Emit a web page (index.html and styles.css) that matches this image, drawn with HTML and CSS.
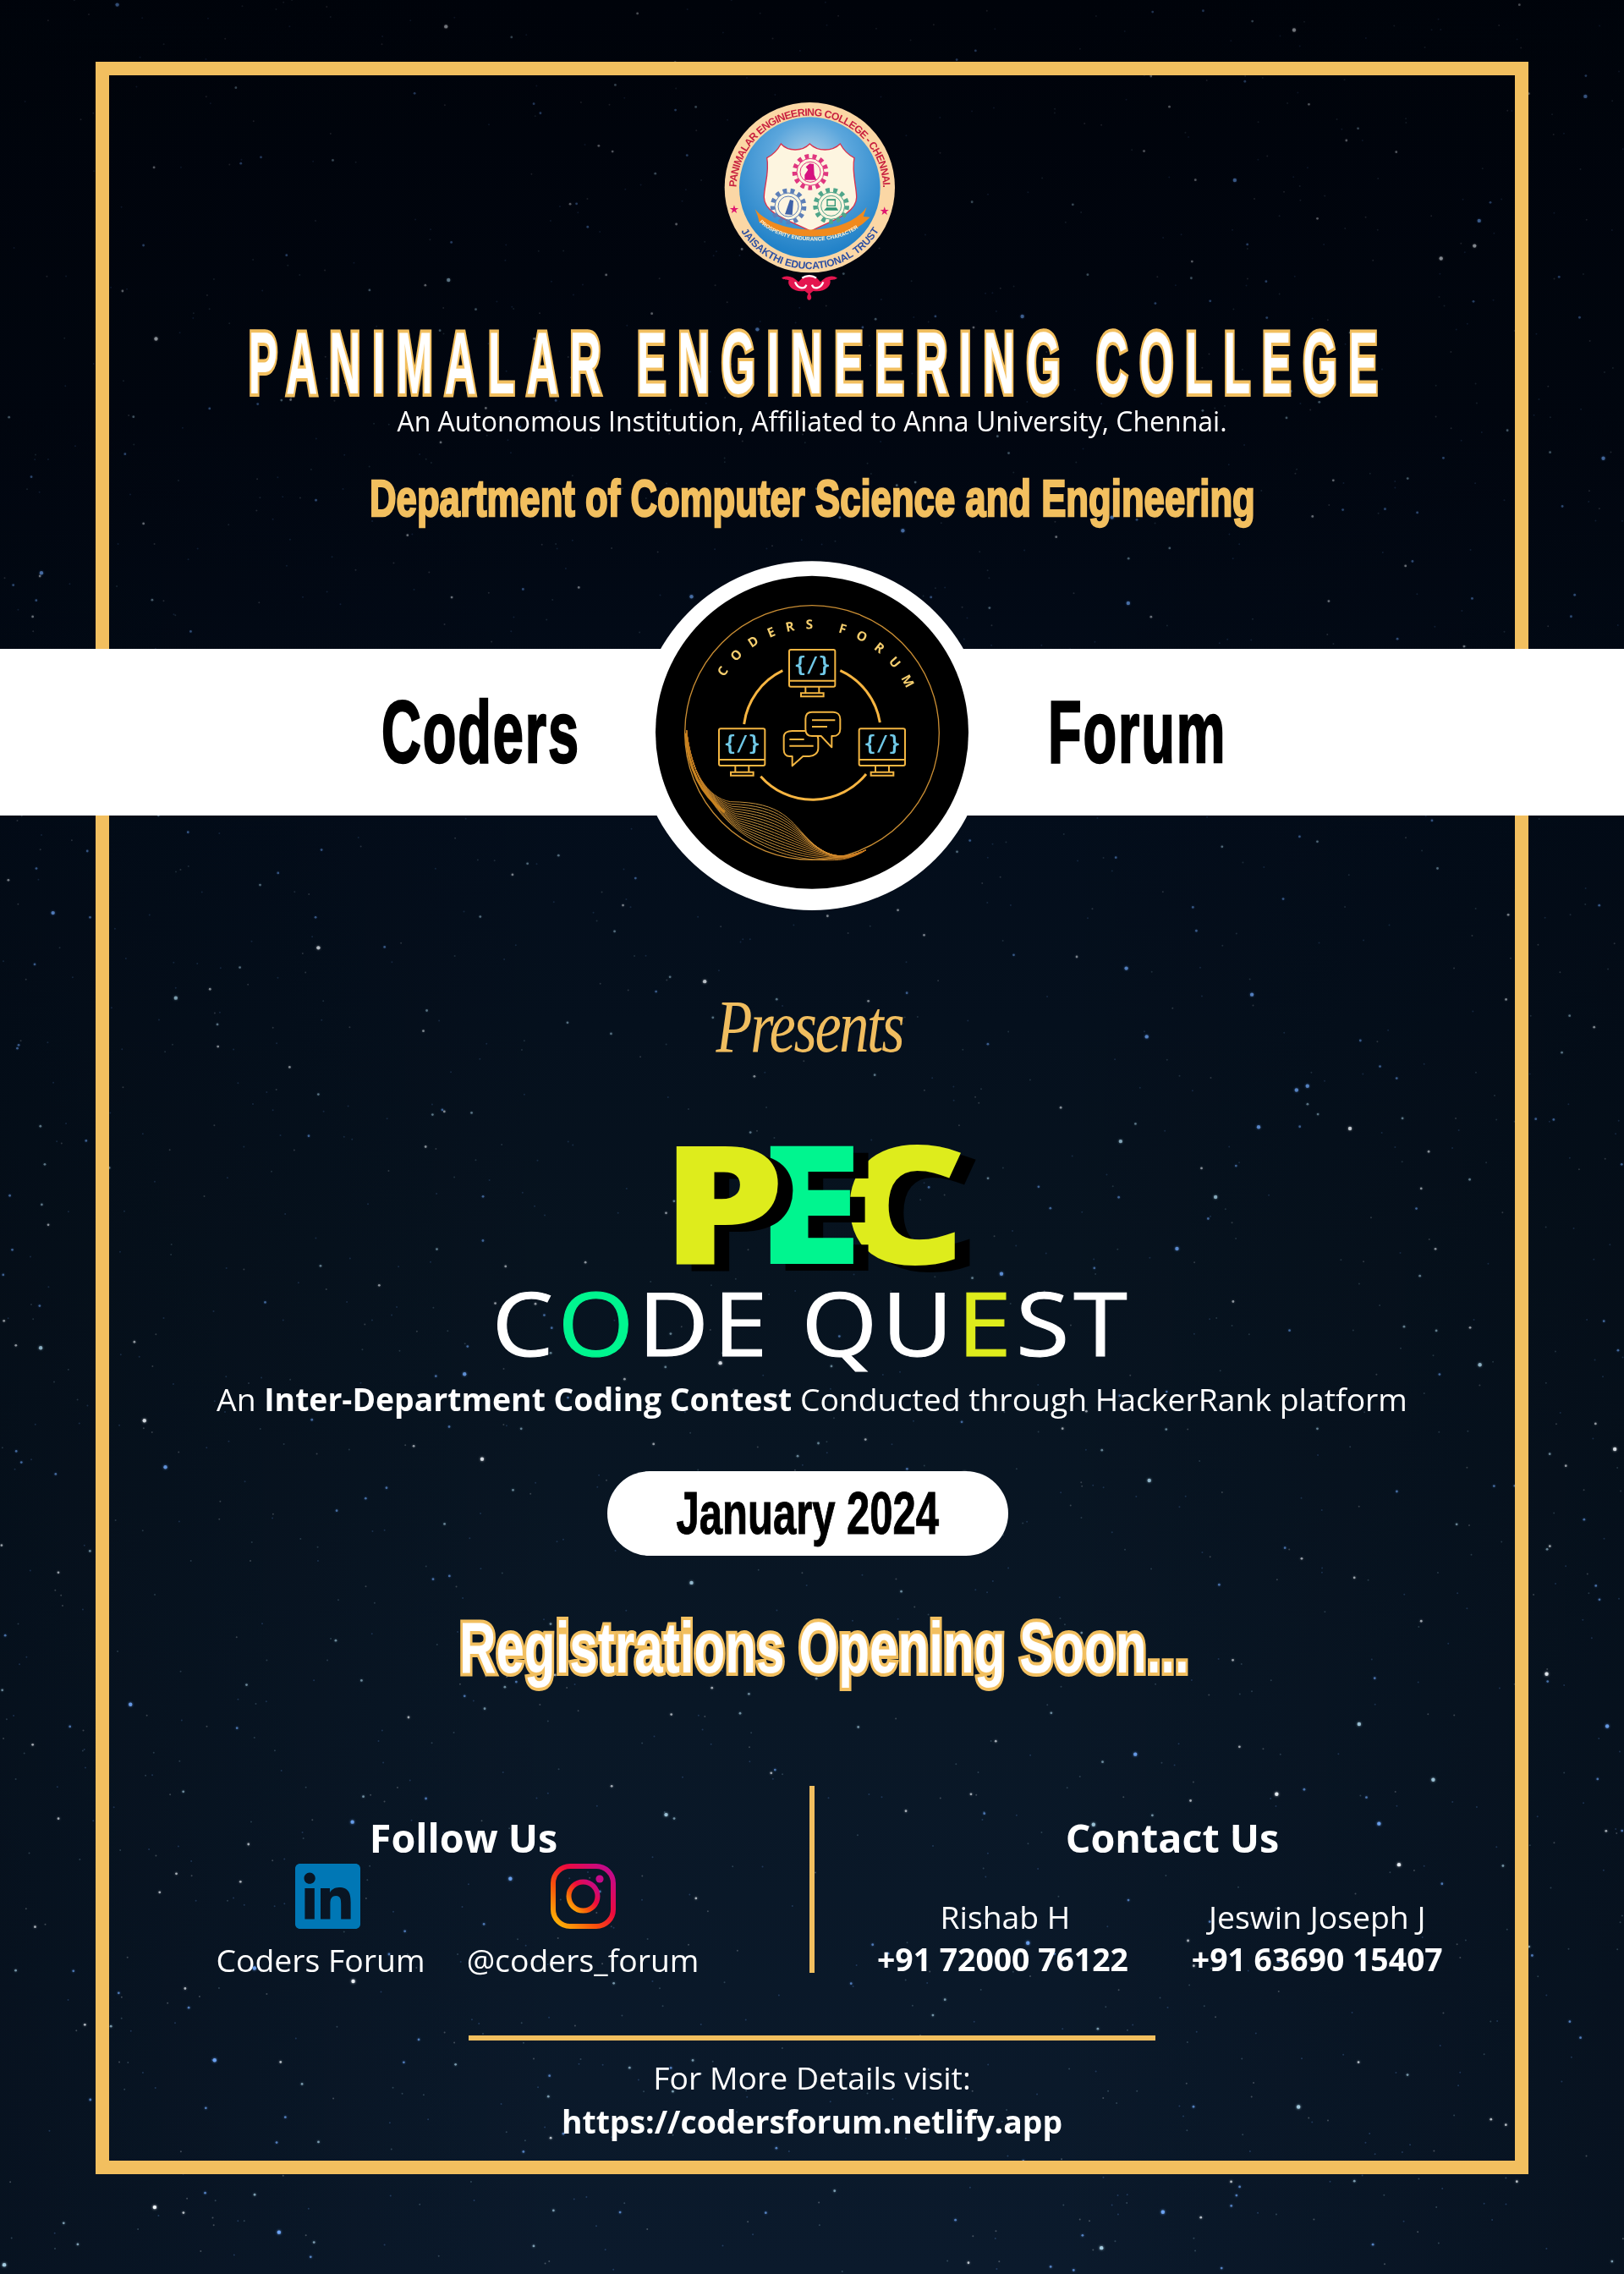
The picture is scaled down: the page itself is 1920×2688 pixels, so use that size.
FILE: index.html
```html
<!DOCTYPE html>
<html lang="en">
<head>
<meta charset="utf-8">
<title>PEC Code Quest</title>
<link rel="stylesheet" href="styles.css">
</head>
<body>
<main class="page">
  <canvas class="stars" id="stars" width="1920" height="2688"></canvas>
  <div class="frame">
    <svg class="seal" viewBox="0 0 1080 870" aria-label="Panimalar Engineering College seal">
      <defs>
        <radialGradient id="sky" cx="50%" cy="32%" r="65%">
          <stop offset="0" stop-color="#b9d6ea"/><stop offset=".45" stop-color="#5ba6dc"/><stop offset="1" stop-color="#2282c8"/>
        </radialGradient>
        <path id="sealTop" d="M272 400A260 260 0 0 1 792 400"/>
        <path id="sealBottom" d="M285 545A289 289 0 0 0 779 545"/>
        <path id="sealBanner" d="M352 516C430 600 640 610 722 522"/>
      </defs>
      <circle cx="532" cy="395" r="302" fill="#fbd7a5"/>
      <circle cx="532" cy="395" r="250" fill="url(#sky)"/>
      <path d="M430 240C455 268 505 268 532 240C560 268 612 268 640 240C652 262 670 280 690 290C680 340 698 390 698 430C698 490 600 515 535 550C470 515 370 490 370 430C370 390 390 340 380 290C400 280 418 262 430 240Z" fill="#fdf5e0" stroke="#d8324f" stroke-width="4"/>
      <g fill="none">
        <g stroke="#e0367f">
          <circle cx="534" cy="340" r="56" stroke-width="16" stroke-dasharray="14 13"/>
          <circle cx="534" cy="340" r="48" stroke-width="3"/>
          <circle cx="534" cy="340" r="36" stroke-width="3"/>
        </g>
        <g stroke="#5c7fb8">
          <circle cx="456" cy="462" r="56" stroke-width="16" stroke-dasharray="14 13"/>
          <circle cx="456" cy="462" r="48" stroke-width="3"/>
          <circle cx="456" cy="462" r="36" stroke-width="3"/>
        </g>
        <g stroke="#4fa58a">
          <circle cx="608" cy="460" r="56" stroke-width="16" stroke-dasharray="14 13"/>
          <circle cx="608" cy="460" r="48" stroke-width="3"/>
          <circle cx="608" cy="460" r="36" stroke-width="3"/>
        </g>
      </g>
      <path d="M514 368L514 350L526 332L518 322L532 310L546 312L548 350L556 368Z" fill="#d6127f"/>
      <path d="M444 490L462 438L474 442L470 492Z" fill="#3e62a8"/>
      <path d="M592 436H624V462H592ZM582 476L592 466H626L634 476Z" fill="#2f9575"/>
      <path d="M596 441H620V458H596Z" fill="#fdf5e0"/>
      <path d="M338 472C345 490 350 500 352 516C430 580 640 590 722 522L746 500L722 498L734 464C660 570 420 570 338 472Z" fill="#f08a1e"/>
      <text class="seal-motto"><textPath href="#sealBanner" textLength="376" startOffset="2">PROSPERITY ENDURANCE CHARACTER</textPath></text>
      <text class="seal-top"><textPath href="#sealTop" textLength="806" startOffset="6">PANIMALAR ENGINEERING COLLEGE - CHENNAI.</textPath></text>
      <text class="seal-bottom"><textPath href="#sealBottom" textLength="584" startOffset="6">JAISAKTHI EDUCATIONAL TRUST</textPath></text>
      <text class="seal-star" x="264" y="487">★</text>
      <text class="seal-star" x="797" y="491">★</text>
      <path d="M432 716C450 700 480 715 492 730C505 715 515 706 530 704C548 706 558 715 570 730C582 715 610 700 630 716C620 724 612 720 604 724C610 740 590 768 545 762C538 766 534 772 530 774C524 770 520 766 514 762C470 768 450 740 458 724C450 720 442 724 432 716Z" fill="#e4164f"/>
      <path d="M480 730C490 756 515 756 520 740M580 730C570 756 545 756 540 740M505 716C518 706 542 706 555 716" fill="none" stroke="#fff" stroke-width="7"/>
      <path d="M530 768C540 778 540 794 530 794C520 794 520 778 530 768Z" fill="#e4164f"/>
    </svg>

    <h1 class="college">PANIMALAR ENGINEERING COLLEGE</h1>
    <p class="affiliation">An Autonomous Institution, Affiliated to Anna University, Chennai.</p>
    <h2 class="department">Department of Computer Science and Engineering</h2>

    <section class="band">
      <div class="band-word band-word-left"><span>Coders</span></div>
      <svg class="club-logo" viewBox="0 0 1320 1320" aria-label="Coders Forum logo">
        <defs>
          <linearGradient id="swoosh" x1="0" y1="0" x2="1" y2="0">
            <stop offset="0" stop-color="#b5701c"/><stop offset=".4" stop-color="#e9b04c"/><stop offset="1" stop-color="#c9781c"/>
          </linearGradient>
          <path id="clubArc" d="M348 452A370 370 0 0 1 1000 503"/>
          <g id="monitor">
            <rect x="2" y="2" width="163" height="131" rx="6" fill="none" stroke="#f2b541" stroke-width="6"/>
            <path d="M2 112H165M60 133V154M108 133V154M44 156H124V168H44Z" fill="none" stroke="#f2b541" stroke-width="6"/>
            <text class="code-glyph" x="84" y="80">{/}</text>
          </g>
        </defs>
        <circle cx="660" cy="659" r="619" fill="#fff"/>
        <circle cx="660" cy="647.5" r="555" fill="#000"/>
        <circle cx="660" cy="648" r="451" fill="none" stroke="#c98d33" stroke-width="4"/>
        <g id="swooshLines" fill="none" stroke="url(#swoosh)" stroke-width="2.6"></g>
        <path d="M212 650C220 780 270 870 350 930" fill="none" stroke="#c9831f" stroke-width="9"/>
        <text class="club-title"><textPath href="#clubArc" textLength="790">CODERS FORUM</textPath></text>
        <g fill="none" stroke="#f7b541" stroke-width="9">
          <path d="M556 428A245 245 0 0 0 419 618"/>
          <path d="M760 428A245 245 0 0 1 901 612"/>
          <path d="M478 803A245 245 0 0 0 852 795"/>
        </g>
        <use href="#monitor" x="577" y="352"/>
        <use href="#monitor" x="328" y="632"/>
        <use href="#monitor" x="825" y="632"/>
        <g stroke="#f2b541" stroke-width="6" stroke-linejoin="round">
          <path d="M590 642H650C668 642 682 656 682 670V704C682 720 668 732 650 732H628L590 766V732H580C568 732 560 722 560 708V664C560 650 572 642 590 642Z" fill="#000"/>
          <path d="M660 575H735C750 575 760 585 760 600V635C760 650 750 660 735 660H730V700L692 660H660C645 660 637 650 637 635V600C637 585 645 575 660 575Z" fill="#000"/>
          <path d="M580 672H632M580 695H665M660 604H742M660 627H714" fill="none"/>
        </g>
      </svg>
      <div class="band-word band-word-right"><span>Forum</span></div>
    </section>

    <p class="presents">Presents</p>

    <div class="pec">
      <span class="pec-p">P</span><span class="pec-e">E</span><span class="pec-c">C</span>
    </div>
    <div class="quest">C<span class="mint">O</span>DE QU<span class="lime">E</span>ST</div>
    <p class="tagline">An <strong>Inter-Department Coding Contest</strong> Conducted through HackerRank platform</p>
    <div class="date-pill"><span>January 2024</span></div>
    <div class="soon">Registrations Opening Soon...</div>

    <section class="contact">
      <div class="follow">
        <h3 class="contact-title">Follow Us</h3>
        <div class="socials">
          <div class="social">
            <svg class="social-icon social-icon-in" viewBox="0 0 24 24" aria-label="LinkedIn"><path fill="#0077b5" d="M20.447 20.452h-3.554v-5.569c0-1.328-.027-3.037-1.852-3.037-1.853 0-2.136 1.445-2.136 2.939v5.667H9.351V9h3.414v1.561h.046c.477-.9 1.637-1.85 3.37-1.85 3.601 0 4.267 2.37 4.267 5.455v6.286zM5.337 7.433c-1.144 0-2.063-.926-2.063-2.065 0-1.138.92-2.063 2.063-2.063 1.14 0 2.064.925 2.064 2.063 0 1.139-.925 2.065-2.064 2.065zm1.782 13.019H3.555V9h3.564v11.452zM22.225 0H1.771C.792 0 0 .774 0 1.729v20.542C0 23.227.792 24 1.771 24h20.451C23.2 24 24 23.227 24 22.271V1.729C24 .774 23.2 0 22.222 0h.003z"/></svg>
            <span>Coders Forum</span>
          </div>
          <div class="social">
            <svg class="social-icon" viewBox="0 0 77 77" aria-label="Instagram">
              <defs>
                <linearGradient id="insta" x1="0" y1="1" x2="1" y2="0">
                  <stop offset="0" stop-color="#fdc205"/><stop offset=".35" stop-color="#f8500c"/><stop offset=".6" stop-color="#ee0a3c"/><stop offset="1" stop-color="#bb0a9a"/>
                </linearGradient>
              </defs>
              <rect x="3" y="3" width="71" height="71" rx="20" fill="none" stroke="url(#insta)" stroke-width="6"/>
              <circle cx="38.5" cy="38.5" r="17" fill="none" stroke="url(#insta)" stroke-width="6"/>
              <circle cx="58" cy="18" r="4.6" fill="#c60a8a"/>
            </svg>
            <span>@coders_forum</span>
          </div>
        </div>
      </div>
      <div class="divider"></div>
      <div class="reach">
        <h3 class="contact-title">Contact Us</h3>
        <div class="people">
          <div class="person person-one"><span class="person-name">Rishab H</span><strong>+91 72000 76122</strong></div>
          <div class="person person-two"><span>Jeswin Joseph J</span><strong>+91 63690 15407</strong></div>
        </div>
      </div>
    </section>

    <div class="rule"></div>
    <p class="more">For More Details visit:</p>
    <p class="url">https://codersforum.netlify.app</p>
  </div>
</main>
<script src="script.js"></script>
</body>
</html>
```
FILE: styles.css
```css
* { box-sizing: border-box; }
html, body { margin: 0; padding: 0; }
body { font-family: "Open Sans", "Noto Sans", sans-serif; color: #fff; background: #050d1a; }
h1, h2, h3, p { margin: 0; font-weight: inherit; font-size: inherit; }

.page {
  position: relative;
  width: 1920px;
  height: 2688px;
  padding: 73px 113px 0;
  overflow: hidden;
  background:
    linear-gradient(90deg, rgba(0, 5, 12, .35) 0%, rgba(0, 5, 12, 0) 35%, rgba(0, 5, 12, 0) 65%, rgba(0, 5, 12, .35) 100%),
    linear-gradient(180deg, #00030a 0%, #010610 18%, #030d1b 35%, #07131f 55%, #091726 75%, #0b1a2c 100%);
}
.stars { position: absolute; left: 0; top: 0; width: 1920px; height: 2688px; }

.frame {
  position: relative;
  height: 2497px;
  border: 16px solid #f2bf5f;
  text-align: center;
  display: flex;
  flex-direction: column;
  align-items: center;
}

.seal { display: block; width: 360px; height: 290px; margin-top: 1px; flex: none; }
.seal-top { font: 700 37px "Liberation Sans", sans-serif; fill: #c8203f; }
.seal-bottom { font: 700 36px "Liberation Sans", sans-serif; fill: #2c4fa3; }
.seal-motto { font: 700 19px "Liberation Sans", sans-serif; fill: #fff3d8; }
.seal-star { font: 40px "DejaVu Sans", sans-serif; fill: #e0176f; text-anchor: middle; }

.college, .department, .band-word, .date-pill, .soon {
  font-family: "Liberation Sans", sans-serif;
  font-weight: 700;
}
.college {
  margin-top: 5px;
  margin-left: 16px;
  height: 90px;
  line-height: 90px;
  font-size: 103px;
  letter-spacing: 28px;
  white-space: nowrap;
  color: #fff;
  -webkit-text-stroke: 8px #f2bf5f;
  paint-order: stroke fill;
  transform: scaleX(.5);
}
.affiliation { margin-top: 3px; height: 40px; line-height: 40px; font-size: 32px; white-space: nowrap; }
.department {
  margin-top: 35px;
  height: 72px;
  line-height: 72px;
  font-size: 62px;
  color: #f2bf5f;
  white-space: nowrap;
  -webkit-text-stroke: 2.5px #f2bf5f;
  transform: scaleX(.705);
}

.band {
  flex: none;
  width: 1920px;
  height: 197px;
  margin-top: 142px;
  background: #fff;
  display: grid;
  grid-template-columns: 1fr 440px 1fr;
  align-items: center;
}
.band-word { color: #000; font-size: 103px; line-height: 197px; letter-spacing: 3px; }
.band-word span { display: inline-block; -webkit-text-stroke: 2.5px #000; transform: scaleX(.63); }
.band-word-left { text-align: right; padding-right: 54px; }
.band-word-left span { transform-origin: right center; }
.band-word-right { text-align: left; padding-left: 59px; }
.band-word-right span { transform-origin: left center; }
.club-logo { display: block; width: 440px; height: 440px; margin: -117px 0 -126px; }
.club-title { font: 700 46px "Open Sans", sans-serif; fill: #f5ce6e; }
.code-glyph { font: 700 72px "DejaVu Sans Mono", monospace; fill: #70c9e8; text-anchor: middle; }

.presents {
  margin-top: 200px;
  margin-left: -6px;
  height: 100px;
  font: italic 400 88px/100px "Liberation Serif", serif;
  letter-spacing: -3px;
  color: #f0bd5f;
  white-space: nowrap;
  transform: scaleX(.8);
}

.pec {
  margin-top: 74px;
  margin-left: -18px;
  height: 160px;
  line-height: 160px;
  font-weight: 800;
  font-size: 196px;
  display: flex;
  color: #deec1c;
  text-shadow: 15px 8px 0 #000;
}
.pec span { display: block; position: relative; transform: scaleX(1.18); transform-origin: left center; }
.pec-p { z-index: 3; }
.pec-e { z-index: 2; color: #00f58f; margin-left: -13px; }
.pec-c { z-index: 1; margin-left: -7px; }

.quest {
  margin-top: 15px;
  height: 100px;
  line-height: 100px;
  font-size: 105px;
  letter-spacing: 4.6px;
  white-space: nowrap;
  -webkit-text-stroke: 1px;
  transform: scaleX(1.1);
}
.mint { color: #00f58f; }
.lime { color: #deec1c; }

.tagline { margin-top: 16px; height: 50px; line-height: 50px; font-size: 37.33px; white-space: nowrap; }
.tagline strong { font-weight: 700; }

.date-pill {
  margin-top: 60px;
  margin-left: -10px;
  width: 474px;
  height: 100px;
  border-radius: 50px;
  background: #fff;
  color: #000;
  line-height: 100px;
  font-size: 70px;
  white-space: nowrap;
}
.date-pill span { display: inline-block; transform: scaleX(.7); -webkit-text-stroke: 1px #000; }
.soon {
  margin-top: 58px;
  margin-left: 28px;
  height: 100px;
  line-height: 100px;
  font-size: 86px;
  white-space: nowrap;
  color: #fff;
  -webkit-text-stroke: 8px #f2bf5f;
  paint-order: stroke fill;
  transform: scaleX(.7);
}

.contact {
  margin-top: 114px;
  width: 100%;
  height: 221px;
  display: flex;
}
.follow { width: 596px; margin-left: 121px; flex: none; }
.contact-title { font-size: 46.67px; font-weight: 700; line-height: 60px; margin-top: 31px; white-space: nowrap; }
.socials { display: grid; grid-template-columns: 258px 300px; column-gap: 31px; justify-content: start; }
.social { display: flex; flex-direction: column; align-items: center; font-size: 37.33px; line-height: 50px; white-space: nowrap; }
.social-icon { display: block; width: 77px; height: 77px; margin-top: 1px; margin-bottom: 12px; }
.social-icon-in { margin-left: 16px; }
.divider { width: 6px; height: 221px; margin-left: 111px; background: #f2bf5f; flex: none; }
.reach { flex: 1; padding-left: 18px; }
.people { display: flex; margin-top: 39px; font-size: 37.33px; line-height: 50px; }
.person { display: flex; flex-direction: column; align-items: center; white-space: nowrap; }
.person strong { font-weight: 700; }
.person-name { margin-left: 6px; }
.person-one { margin-left: 56px; }
.person-two { margin-left: 75px; }

.rule { margin-top: 74px; width: 812px; height: 6px; background: #f2bf5f; flex: none; }
.more { margin-top: 20px; height: 48px; line-height: 48px; font-size: 37.33px; }
.url { margin-top: 3px; height: 50px; line-height: 50px; font-size: 37.33px; font-weight: 700; }
```
FILE: script.js
```js
// Starfield backdrop and the fine line bundle of the club logo.
var seed = 20240101;
function rnd() { seed = (seed * 1664525 + 1013904223) % 4294967296; return seed / 4294967296; }

var ctx = document.getElementById('stars').getContext('2d');
for (var i = 0; i < 2400; i++) {
  var y = rnd() * 2688;
  var x = rnd() * 1920;
  var roll = rnd();
  var r = roll > 0.97 ? 2.2 : roll > 0.75 ? 1.4 : 1;
  var depth = 0.4 + 0.6 * y / 2688;
  var a = (roll > 0.97 ? 1 : roll > 0.75 ? 0.7 : 0.25) * depth;
  var tint = rnd();
  var color = tint > 0.55 ? 'rgba(110,165,245,' + a + ')' : tint > 0.25 ? 'rgba(165,205,225,' + a + ')' : 'rgba(245,250,255,' + a + ')';
  ctx.fillStyle = color;
  ctx.shadowColor = color;
  ctx.shadowBlur = 3;
  ctx.beginPath();
  ctx.arc(x, y, r, 0, Math.PI * 2);
  ctx.fill();
}

var upper = [215,640, 225,780, 290,880, 370,893, 560,895, 580,960, 660,1040, 710,1085, 760,1102, 850,1065];
var lower = [215,640, 230,780, 300,930, 420,1010, 510,1070, 620,1105, 740,1100, 780,1100, 820,1085, 850,1065];
var group = document.getElementById('swooshLines');
for (var n = 0; n <= 14; n++) {
  var t = n / 14, p = [];
  for (var k = 0; k < upper.length; k++) p.push(upper[k] + (lower[k] - upper[k]) * t);
  var path = document.createElementNS('http://www.w3.org/2000/svg', 'path');
  path.setAttribute('d', 'M' + p[0] + ' ' + p[1] + 'C' + p.slice(2, 8).join(' ') + 'C' + p.slice(8, 14).join(' ') + 'C' + p.slice(14, 20).join(' '));
  group.appendChild(path);
}
```
